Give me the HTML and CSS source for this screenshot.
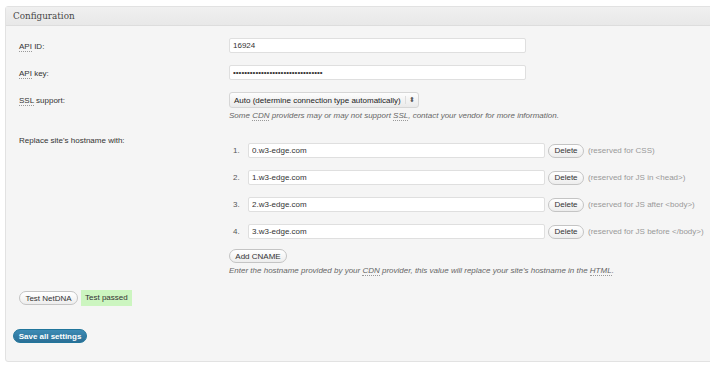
FILE: index.html
```html
<!DOCTYPE html>
<html>
<head>
<meta charset="utf-8">
<link rel="stylesheet" href="styles.css">
</head>
<body>
<div class="panel">
  <h3 class="panel-head">Configuration</h3>
  <div class="panel-body">
    <div class="form">
      <div class="label"><abbr>API</abbr> ID:</div>
      <div class="field"><input class="text wide" type="text" value="16924"></div>

      <div class="label"><abbr>API</abbr> key:</div>
      <div class="field"><input class="text wide" type="text" value="••••••••••••••••••••••••••••••••"></div>

      <div class="label"><abbr>SSL</abbr> support:</div>
      <div class="field">
        <div class="select"><span>Auto (determine connection type automatically)</span><span class="arrows">⬍</span></div>
        <p class="help">Some <abbr>CDN</abbr> providers may or may not support <abbr>SSL</abbr>, contact your vendor for more information.</p>
      </div>

      <div class="label cname-label">Replace site's hostname with:</div>
      <div class="field cname-field">
        <ol class="cnames">
          <li><span class="num">1.</span><input class="text host" type="text" value="0.w3-edge.com"><span class="btn small">Delete</span><span class="note">(reserved for CSS)</span></li>
          <li><span class="num">2.</span><input class="text host" type="text" value="1.w3-edge.com"><span class="btn small">Delete</span><span class="note">(reserved for JS in &lt;head&gt;)</span></li>
          <li><span class="num">3.</span><input class="text host" type="text" value="2.w3-edge.com"><span class="btn small">Delete</span><span class="note">(reserved for JS after &lt;body&gt;)</span></li>
          <li><span class="num">4.</span><input class="text host" type="text" value="3.w3-edge.com"><span class="btn small">Delete</span><span class="note">(reserved for JS before &lt;/body&gt;)</span></li>
        </ol>
        <span class="btn add">Add CNAME</span>
        <p class="help">Enter the hostname provided by your <abbr>CDN</abbr> provider, this value will replace your site's hostname in the <abbr>HTML</abbr>.</p>
      </div>
    </div>
    <div class="test-row">
      <span class="btn test">Test NetDNA</span><span class="passed">Test passed</span>
    </div>
    <div class="save-row"><span class="btn-primary">Save all settings</span></div>
  </div>
</div>
</body>
</html>
```
FILE: styles.css
```css
* { box-sizing: border-box; }
html, body { margin: 0; padding: 0; background: #fff; }
body {
  font-family: "Liberation Sans", Arial, sans-serif;
  font-size: 8px;
  color: #333;
  overflow: hidden;
}
.panel {
  margin: 6px -10px 0 5px;
  border: 1px solid #e2e2e2;
  border-radius: 3px 0 0 3px;
  background: #f5f5f5;
  height: 356px;
}
.panel-head {
  margin: 0;
  height: 19px;
  padding: 0 0 0 7px;
  background: linear-gradient(#f0f0f0, #e8e8e8);
  border-bottom: 1px solid #dddddd;
  font-family: "DejaVu Serif", Georgia, serif;
  font-weight: normal;
  font-size: 8.8px;
  line-height: 19px;
  color: #464646;
}
.panel-body { padding: 12px 0 0 7px; }
.form {
  display: grid;
  grid-template-columns: 210px 1fr;
  row-gap: 12px;
  padding-left: 6px;
}
.label { padding-top: 4px; line-height: 10px; }
abbr { text-decoration: none; border-bottom: 1px dotted #999; }
.field { min-height: 15px; }
input.text {
  display: block;
  height: 15px;
  border: 1px solid #dfdfdf;
  border-radius: 2px;
  background: #fff;
  font-family: "Liberation Sans", Arial, sans-serif;
  font-size: 8px;
  color: #333;
  padding: 0 3px;
  margin: 0;
  outline: none;
}
input.wide { width: 297px; }
.select {
  display: inline-flex;
  align-items: center;
  height: 16px;
  padding: 0 3px 0 4px;
  border: 1px solid #d6d6d6;
  border-radius: 3px;
  background: linear-gradient(#fdfdfd, #eaeaea);
  font-size: 8px;
  color: #222;
}
.select .arrows {
  margin-left: 4px;
  padding-left: 3px;
  border-left: 1px solid #ddd;
  font-size: 7px;
  color: #555;
}
.help {
  margin: 3px 0 0 0;
  font-style: italic;
  color: #666;
  line-height: 10px;
}
.cname-label { padding-top: 3px; }
.cname-field { padding-top: 10px; }
.cnames { list-style: none; margin: 0; padding: 0; }
.cnames li {
  display: flex;
  align-items: center;
  height: 15px;
  margin-bottom: 12px;
}
.num { width: 19px; padding-left: 4px; color: #555; }
input.host { width: 297px; }
.btn {
  display: inline-flex;
  align-items: center;
  justify-content: center;
  height: 14px;
  padding: 0 6px;
  border: 1px solid #c4c4c4;
  border-radius: 8px;
  background: linear-gradient(#ffffff, #ededed);
  color: #333;
  font-size: 8px;
}
.btn.small { margin-left: 3px; width: 36px; padding: 0; }
.note { margin-left: 4px; color: #999; }
.btn.add { margin-top: -2px; width: 58px; padding: 0; }
.cname-field .help { margin-top: 3px; }
.test-row {
  display: flex;
  align-items: center;
  margin-top: 14px;
  padding-left: 6px;
}
.btn.test { width: 59px; padding: 0; }
.passed {
  margin-left: 3px;
  height: 16px;
  line-height: 16px;
  padding: 0 4px;
  background: #ccf5c0;
  color: #333;
}
.save-row { margin-top: 23px; }
.btn-primary {
  display: inline-flex;
  align-items: center;
  justify-content: center;
  width: 74px;
  height: 14px;
  border-radius: 8px;
  border: 1px solid #21759b;
  background: linear-gradient(#3d8bb5, #2a6f96);
  color: #fff;
  font-weight: bold;
  font-size: 8px;
}
```
